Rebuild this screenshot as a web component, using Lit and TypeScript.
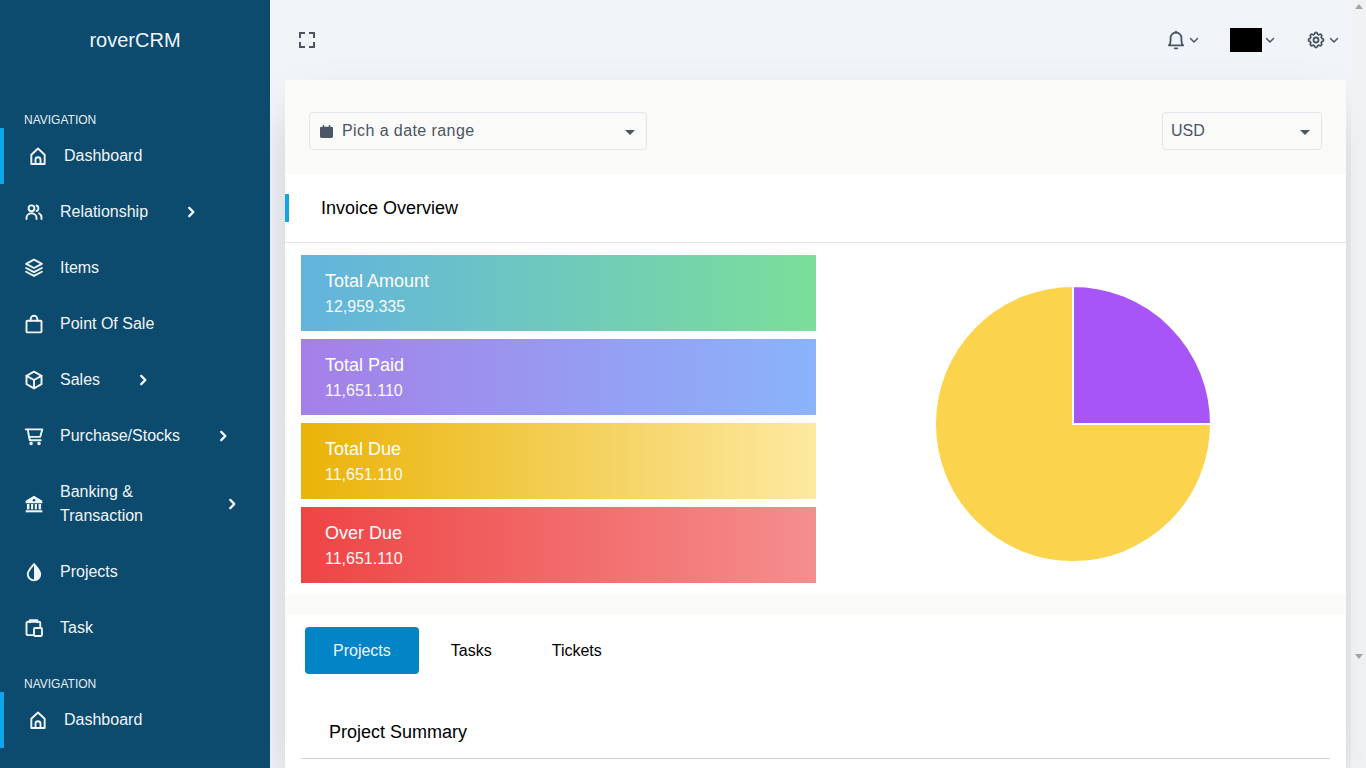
import { LitElement, html, css, svg } from "lit";
import { customElement } from "lit/decorators.js";

const ic = (body: unknown) => html`<svg class="ico" viewBox="0 0 24 24" fill="none" stroke="currentColor" stroke-width="2.300" stroke-linecap="round" stroke-linejoin="round">${body}</svg>`;

const icons: Record<string, unknown> = {
  home: ic(svg`<path d="M4 21.500V10.500L12 3l8 7.500v11z"/><path d="M9 21.500v-5a3 3 0 0 1 6 0v5"/>`),
  users: ic(svg`<circle cx="9" cy="7.500" r="3.500"/><path d="M3 20.500v-1.500a6 5.500 0 0 1 12 0v1.500"/><path d="M15 4.200a3.500 3.500 0 0 1 0 6.600"/><path d="M18 13.500a6 6 0 0 1 3 5v2"/>`),
  layers: ic(svg`<path d="M12 2l9.500 5-9.500 5-9.500-5z"/><path d="M2.500 12l9.500 5 9.500-5"/><path d="M2.500 16.500l9.500 5 9.500-5"/>`),
  bag: ic(svg`<rect x="3" y="8" width="18" height="14" rx="1"/><path d="M8 8V6a4 4 0 0 1 8 0v2"/>`),
  cube: ic(svg`<path d="M12 2l9 5v10l-9 5-9-5V7z"/><path d="M3 7l9 5 9-5"/><path d="M12 12v10"/>`),
  cart: ic(svg`<path d="M2 4h20l-2.500 9H6L4.500 4"/><path d="M6 13l1 4h13"/><circle cx="8.500" cy="21" r="1"/><circle cx="18" cy="21" r="1"/>`),
  bank: html`<svg class="ico" viewBox="0 0 24 24" fill="currentColor"><path d="M12 2l10 6v3H2V8z"/><circle cx="12" cy="7.500" r="1.500" fill="#0c4a6e"/><rect x="3.500" y="12" width="3" height="6.500"/><rect x="8.500" y="12" width="2.500" height="6.500"/><rect x="13" y="12" width="2.500" height="6.500"/><rect x="17.500" y="12" width="3" height="6.500"/><rect x="2" y="19.500" width="20" height="2.500"/></svg>`,
  drop: ic(svg`<path d="M12 2.500c4.500 5 7.500 8.500 7.500 12a7.500 7.500 0 0 1-15 0c0-3.500 3-7 7.500-12z"/><path fill="currentColor" stroke="none" d="M12 2.500c4.500 5 7.500 8.500 7.500 12a7.500 7.500 0 0 1-7.500 7.500z"/>`),
  task: ic(svg`<path d="M11 20.500H4.500A1.500 1.500 0 0 1 3 19V6A1.500 1.500 0 0 1 4.500 4.500H18A1.500 1.500 0 0 1 19.500 6v5"/><path d="M7 5V2.500h9V5"/><rect x="12" y="12" width="9.500" height="9.500" rx="1"/>`),
};

const chevronRight = html`<svg class="chev" viewBox="0 0 12 12" fill="none" stroke="currentColor" stroke-width="2" stroke-linecap="round" stroke-linejoin="round"><path d="M4.500 2.500L8 6l-3.500 3.500"/></svg>`;
const chevronDown = html`<svg class="chev-d" viewBox="0 0 12 12" fill="none" stroke="currentColor" stroke-width="1.500" stroke-linecap="round" stroke-linejoin="round"><path d="M2.500 4.500L6 8l3.500-3.500"/></svg>`;
const caret = html`<span class="caret"></span>`;

@customElement("app-root")
export class AppRoot extends LitElement {
  static styles = css`
    :host { display: flex; height: 100vh; overflow: hidden; position: relative; font-family: "Liberation Sans", Arial, sans-serif; background: #f1f5f9; color: #000; }
    * { box-sizing: border-box; }
    .side { width: 270px; flex: none; background: #0c4a6e; color: #f1f5f9; position: relative; z-index: 2; }
    .logo { height: 80px; display: flex; align-items: center; justify-content: center; font-size: 20px; color: #f1f5f9; }
    .label { height: 18px; line-height: 20px; font-size: 12px; padding-left: 24px; color: #e5eef4; }
    .label.first { margin-top: 30px; }
    .label.second { margin-top: 18px; }
    .item { display: flex; align-items: center; height: 56px; padding-left: 24px; font-size: 16px; line-height: 24px; }
    .item.tall { height: 80px; }
    .item.active { border-left: 4px solid #0ea5e9; }
    .ico { width: 20px; height: 20px; flex: none; margin-right: 16px; }
    .chev { width: 14px; height: 14px; margin-left: 36px; flex: none; }
    .wrap { width: 129px; }
    .main { flex: 1; min-width: 0; display: flex; flex-direction: column; }
    .top { height: 80px; flex: none; display: flex; align-items: center; padding: 0 26px 0 29px; color: #4b5563; }
    .full { width: 16px; height: 16px; }
    .spacer { flex: 1; }
    .tool { display: flex; align-items: center; }
    .tool + .tool { margin-left: 30px; }
    .t-ico { width: 20px; height: 20px; }
    .chev-d { width: 12px; height: 12px; margin-left: 2px; }
    .avatar { width: 32px; height: 24px; background: #000; }
    .card { width: 1061px; margin-left: 15px; flex: 1; background: #fff; box-shadow: 0 25px 50px -12px rgba(0, 0, 0, .25); }
    .filters { height: 94px; background: #fafaf9; display: flex; justify-content: space-between; align-items: center; padding: 8px 24px 0; }
    .select { height: 38px; display: flex; align-items: center; border: 1px solid #e2e5ea; border-radius: 4px; color: #4b5563; font-size: 16px; }
    .select.date { width: 338px; padding: 0 11px 0 10px; letter-spacing: .42px; }
    .select.cur { width: 160px; padding: 0 11px 0 8px; }
    .cal { width: 13px; height: 13px; margin-right: 9px; }
    .caret { margin-left: auto; width: 0; height: 0; border-left: 5px solid transparent; border-right: 5px solid transparent; border-top: 5px solid #4b5563; margin-top: 2px; }
    .head { height: 69px; border-bottom: 1px solid #e5e7eb; display: flex; align-items: center; font-size: 18px; }
    .bar { width: 4px; height: 28px; background: #0ea5e9; margin-right: 32px; }
    .overview { display: grid; grid-template-columns: 1fr 1fr; padding: 12px 16px; }
    .stats { display: flex; flex-direction: column; gap: 8px; }
    .stat { height: 76px; padding: 14px 24px 0; color: #fff; }
    .stat .t { font-size: 18px; line-height: 24px; }
    .stat .v { font-size: 16px; line-height: 24px; margin-top: 2px; opacity: .95; }
    .g1 { background: linear-gradient(to right, #63b3de, #7bdf9a); }
    .g2 { background: linear-gradient(to right, #a57fe8, #8ab4fa); }
    .g3 { background: linear-gradient(to right, #eab308, #fde9a0); }
    .g4 { background: linear-gradient(to right, #ef4444, #f58e8e); }
    .chart { display: flex; align-items: center; justify-content: center; padding-top: 10px; }
    .pie { width: 278px; height: 278px; display: block; }
    .sep { height: 20px; background: #fafaf9; }
    .tabs { display: flex; gap: 4px; padding: 12px 20px 0; }
    .tab { height: 47px; padding: 0 28px; display: flex; align-items: center; font-size: 16px; border-radius: 4px; }
    .tab.on { background: #0284c7; color: #f1f5f9; }
    .sum { margin: 33px 16px 0; height: 52px; border-bottom: 1px solid #d1d5db; padding-left: 28px; font-size: 18px; display: flex; align-items: center; }
    .scroll { position: absolute; top: 0; right: 0; bottom: 0; width: 15px; background: rgba(241, 241, 241, .72); z-index: 3; }
    .arrows { height: 664px; display: flex; flex-direction: column; justify-content: space-between; align-items: center; padding: 4px 0 5px; }
    .up { width: 0; height: 0; border-left: 4px solid transparent; border-right: 4px solid transparent; border-bottom: 5px solid #a3a3a3; }
    .down { width: 0; height: 0; border-left: 4px solid transparent; border-right: 4px solid transparent; border-top: 5px solid #a3a3a3; }
  `;

  private stats = [
    { c: "g1", t: "Total Amount", v: "12,959.335" },
    { c: "g2", t: "Total Paid", v: "11,651.110" },
    { c: "g3", t: "Total Due", v: "11,651.110" },
    { c: "g4", t: "Over Due", v: "11,651.110" },
  ];

  private nav(icon: string, text: string, chev = false, cls = "", wrap = false) {
    return html`<div class="item ${cls}">${icons[icon]}<span class=${wrap ? "wrap" : ""}>${text}</span>${chev ? chevronRight : ""}</div>`;
  }

  render() {
    return html`
      <aside class="side">
        <div class="logo">roverCRM</div>
        <div class="label first">NAVIGATION</div>
        ${this.nav("home", "Dashboard", false, "active")}
        ${this.nav("users", "Relationship", true)}
        ${this.nav("layers", "Items")}
        ${this.nav("bag", "Point Of Sale")}
        ${this.nav("cube", "Sales", true)}
        ${this.nav("cart", "Purchase/Stocks", true)}
        ${this.nav("bank", "Banking & Transaction", true, "tall", true)}
        ${this.nav("drop", "Projects")}
        ${this.nav("task", "Task")}
        <div class="label second">NAVIGATION</div>
        ${this.nav("home", "Dashboard", false, "active")}
      </aside>
      <div class="main">
        <header class="top">
          <svg class="full" viewBox="0 0 16 16" fill="none" stroke="currentColor" stroke-width="2"><path d="M1 6V1h5M10 1h5v5M15 10v5h-5M6 15H1v-5"/></svg>
          <div class="spacer"></div>
          <div class="tool">
            <svg class="t-ico" viewBox="0 0 24 24" fill="none" stroke="currentColor" stroke-width="2.200" stroke-linecap="round" stroke-linejoin="round"><path d="M3.500 18.500h17c-1.500-1.500-2-3.500-2-6V9.500a6.500 6.500 0 0 0-13 0v3c0 2.500-.5 4.500-2 6z"/><path d="M10.500 22h3"/><path d="M12 3V2"/></svg>
            ${chevronDown}
          </div>
          <div class="tool"><div class="avatar"></div>${chevronDown}</div>
          <div class="tool">
            <svg class="t-ico" viewBox="0 0 24 24" fill="none" stroke="currentColor" stroke-width="2.200" stroke-linecap="round" stroke-linejoin="round"><path d="M10.325 4.317c.426-1.756 2.924-1.756 3.350 0a1.724 1.724 0 0 0 2.573 1.066c1.543-.94 3.310.826 2.370 2.370a1.724 1.724 0 0 0 1.065 2.572c1.756.426 1.756 2.924 0 3.350a1.724 1.724 0 0 0-1.066 2.573c.94 1.543-.826 3.310-2.370 2.370a1.724 1.724 0 0 0-2.572 1.065c-.426 1.756-2.924 1.756-3.350 0a1.724 1.724 0 0 0-2.573-1.066c-1.543.94-3.310-.826-2.370-2.370a1.724 1.724 0 0 0-1.065-2.572c-1.756-.426-1.756-2.924 0-3.350a1.724 1.724 0 0 0 1.066-2.573c-.94-1.543.826-3.310 2.370-2.370 1 .608 2.296.07 2.572-1.065z"/><circle cx="12" cy="12" r="3"/></svg>
            ${chevronDown}
          </div>
        </header>
        <main class="card">
          <div class="filters">
            <div class="select date">
              <svg class="cal" viewBox="0 0 14 14" fill="#4b5563"><path d="M3 0h1.500v2h5V0H11v2h1.500A1.500 1.500 0 0 1 14 3.500V12.500A1.500 1.500 0 0 1 12.500 14h-11A1.500 1.500 0 0 1 0 12.500V3.500A1.500 1.500 0 0 1 1.500 2H3z"/></svg>
              Pich a date range${caret}
            </div>
            <div class="select cur">USD${caret}</div>
          </div>
          <div class="head"><span class="bar"></span>Invoice Overview</div>
          <section class="overview">
            <div class="stats">
              ${this.stats.map((s) => html`<div class="stat ${s.c}"><div class="t">${s.t}</div><div class="v">${s.v}</div></div>`)}
            </div>
            <div class="chart">
              <svg class="pie" viewBox="0 0 278 278">
                <path d="M139 139L277 139A138 138 0 1 1 139 1z" fill="#fcd34d" stroke="#fff" stroke-width="2"/>
                <path d="M139 139L139 1A138 138 0 0 1 277 139z" fill="#a855f7" stroke="#fff" stroke-width="2"/>
              </svg>
            </div>
          </section>
          <div class="sep"></div>
          <nav class="tabs">
            <div class="tab on">Projects</div>
            <div class="tab">Tasks</div>
            <div class="tab">Tickets</div>
          </nav>
          <div class="sum">Project Summary</div>
        </main>
      </div>
      <div class="scroll"><div class="arrows"><span class="up"></span><span class="down"></span></div></div>
    `;
  }
}
